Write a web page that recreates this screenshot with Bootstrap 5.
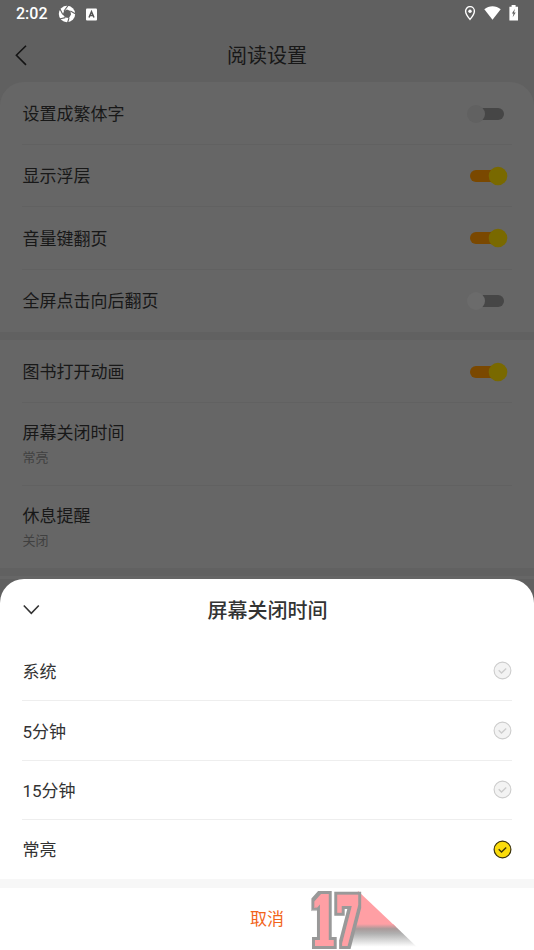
<!DOCTYPE html>
<html lang="zh-CN">
<head>
<meta charset="utf-8">
<meta name="viewport" content="width=device-width, initial-scale=1">
<title>阅读设置</title>
<link href="https://cdn.jsdelivr.net/npm/bootstrap@5.3.0/dist/css/bootstrap.min.css" rel="stylesheet">
<style>
html,body{height:100%}
body{font-family:Roboto,"Noto Sans CJK SC",sans-serif;font-size:17px;line-height:24px;color:#181818;background:#606060;overflow:hidden}
svg{display:block;flex:none}
.phone{height:950px;width:534px}
.status{height:28px;padding:0 15px 0 16px;color:#fff}
.clock{font-size:16px;font-weight:500;line-height:28px;width:42px}
.topbar{height:54px;padding:2px 14px 0}
.topbar .heading{font-size:20px;padding-left:2px}
.settings{background:#666;border-radius:24px 24px 0 0;height:497px}
.group{padding:0 22px}
.group:first-child{padding-bottom:1px}
.group+.group{border-top:8px solid #616161}
.setting{height:62.5px;padding-top:1px}
.setting:first-child{height:61.5px;padding-top:2px}
.setting>span:first-child{padding:1px 0 0 .5px}
.choice>span{padding:2px 0 0 .5px}
.setting+.setting{border-top:1px solid #616161}
.setting.tall{height:83px;padding-top:0}
.value{font-size:13px;line-height:18px;color:#404040;margin-top:4px;padding-left:.5px}
.sheet{background:#fff;border-radius:24px 24px 0 0;margin-top:-24px;position:relative;height:371px;color:#333}
.under{height:603px;flex:none;background:#606060}
.sheet-head{height:62px;padding:0 22px}
.sheet-title{font-size:20px;font-weight:500;color:#333;padding:1px 1px 0 0}
.choices{padding:0 22px}
.choice{height:59.4px}
.choice+.choice{border-top:1.5px solid #eee}
.cancel{border-top:9px solid #f7f7f7;height:71px;color:#f2641a;padding-top:1px}
.stamp{position:absolute;left:308px;bottom:0}
.stamp text{font-family:"DejaVu Serif",serif;font-weight:700}
</style>
</head>
<body>
<div class="phone d-flex flex-column">
  <div class="under">
    <div class="status d-flex align-items-center">
      <span class="clock">2:02</span>
      <svg width="18" height="18" viewBox="0 0 18 18"><circle cx="9" cy="9" r="8.2" fill="#fff"/><g fill="#606060"><path d="M6 6 9 4.6 12.4 6 13 9.5 11 13 7.2 12.6 4.8 9.5Z"/></g><g stroke="#606060" stroke-width="1.1"><path d="M6 6 10.5 0M12.4 6 17.8 9M11 13 9.5 18M7.2 12.6 1.5 14M4.8 9.5 2 4"/></g></svg>
      <svg class="ms-2" width="15" height="13" viewBox="0 0 15 13"><rect x="2" y=".5" width="11" height="12" rx="1" fill="#fff"/><path d="M5 9.5 7.5 3.6 10 9.5M6 7.6H9" fill="none" stroke="#555" stroke-width="1.5"/></svg>
      <svg class="ms-auto" width="12" height="16" viewBox="0 0 12 16"><path d="M6 .6a4.4 4.4 0 0 0-4.4 4.4C1.6 8.4 6 13.4 6 13.4s4.4-5 4.4-8.4A4.4 4.4 0 0 0 6 .6Z" fill="none" stroke="#fff" stroke-width="1.4"/><circle cx="6" cy="5.2" r="1.7" fill="#fff"/></svg>
      <svg class="ms-2" width="17" height="16" viewBox="0 0 17 16"><path d="M.3 3.2C5-.7 12-.7 16.7 3.2L8.5 13.7Z" fill="#fff"/></svg>
      <svg class="ms-2" width="10" height="18" viewBox="0 0 10 18"><path d="M2.6 0h4v1.8h2.4V15.4H.4V1.8H2.6Z" fill="#fff"/><path d="M6 3.8 2.9 8.5H4.5L3.7 12.2 6.7 7.5H5Z" fill="#606060"/></svg>
    </div>
    <header class="topbar d-flex align-items-center">
      <svg width="14" height="22" viewBox="0 0 14 22"><path d="M12 .7 2.4 10.2 12 19.9" fill="none" stroke="#141414" stroke-width="1.6"/></svg>
      <div class="heading flex-grow-1 text-center">阅读设置</div>
      <span class="ps-3"></span>
    </header>
    <main class="settings">
      <section class="group">
        <div class="setting d-flex align-items-center justify-content-between"><span>设置成繁体字</span><svg width="46" height="22"><rect x="6" y="5" width="32" height="12" rx="6" fill="#464646"/><circle cx="10" cy="11" r="9" fill="#616161"/></svg></div>
        <div class="setting d-flex align-items-center justify-content-between"><span>显示浮层</span><svg width="46" height="22"><rect x="4" y="5" width="34" height="12" rx="6" fill="#7a4800"/><circle cx="32" cy="11" r="9.3" fill="#796900"/></svg></div>
        <div class="setting d-flex align-items-center justify-content-between"><span>音量键翻页</span><svg width="46" height="22"><rect x="4" y="5" width="34" height="12" rx="6" fill="#7a4800"/><circle cx="32" cy="11" r="9.3" fill="#796900"/></svg></div>
        <div class="setting d-flex align-items-center justify-content-between"><span>全屏点击向后翻页</span><svg width="46" height="22"><rect x="6" y="5" width="32" height="12" rx="6" fill="#464646"/><circle cx="10" cy="11" r="9" fill="#6b6b6b"/></svg></div>
      </section>
      <section class="group">
        <div class="setting d-flex align-items-center justify-content-between"><span>图书打开动画</span><svg width="46" height="22"><rect x="4" y="5" width="34" height="12" rx="6" fill="#7a4800"/><circle cx="32" cy="11" r="9.3" fill="#796900"/></svg></div>
        <div class="setting tall d-flex flex-column justify-content-center"><span>屏幕关闭时间</span><span class="value">常亮</span></div>
        <div class="setting tall d-flex flex-column justify-content-center"><span>休息提醒</span><span class="value">关闭</span></div>
      </section>
      <section class="group"></section>
    </main>
  </div>
  <div class="sheet flex-shrink-0">
    <div class="sheet-head d-flex align-items-center">
      <svg width="18" height="12" viewBox="0 0 18 12"><path d="M1.8 1.5 9.3 9.3 16.8 1.5" fill="none" stroke="#333" stroke-width="1.6"/></svg>
      <div class="sheet-title flex-grow-1 text-center">屏幕关闭时间</div>
      <span class="ps-3"></span>
    </div>
    <div class="choices">
      <div class="choice d-flex align-items-center justify-content-between"><span>系统</span><svg width="19" height="19" viewBox="0 0 19 19"><circle cx="9.5" cy="9.5" r="8.4" fill="#f3f3f3" stroke="#ccc" stroke-width="1.1"/><path d="M5.7 9.3 8.5 12 13.2 7.5" fill="none" stroke="#ccc" stroke-width="1.3"/></svg></div>
      <div class="choice d-flex align-items-center justify-content-between"><span>5分钟</span><svg width="19" height="19" viewBox="0 0 19 19"><circle cx="9.5" cy="9.5" r="8.4" fill="#f3f3f3" stroke="#ccc" stroke-width="1.1"/><path d="M5.7 9.3 8.5 12 13.2 7.5" fill="none" stroke="#ccc" stroke-width="1.3"/></svg></div>
      <div class="choice d-flex align-items-center justify-content-between"><span>15分钟</span><svg width="19" height="19" viewBox="0 0 19 19"><circle cx="9.5" cy="9.5" r="8.4" fill="#f3f3f3" stroke="#ccc" stroke-width="1.1"/><path d="M5.7 9.3 8.5 12 13.2 7.5" fill="none" stroke="#ccc" stroke-width="1.3"/></svg></div>
      <div class="choice d-flex align-items-center justify-content-between"><span>常亮</span><svg width="19" height="19" viewBox="0 0 19 19"><circle cx="9.5" cy="9.5" r="8.4" fill="#fbdc0b" stroke="#3b320c" stroke-width="1.2"/><path d="M5.7 9.3 8.5 12 13.2 7.5" fill="none" stroke="#3b320c" stroke-width="1.3"/></svg></div>
    </div>
    <div class="cancel d-flex align-items-center justify-content-center">取消</div>
    <svg class="stamp" width="112" height="60" viewBox="0 0 112 60">
      <defs>
        <linearGradient id="fade" x1="0" y1="0" x2="0" y2="1"><stop offset="0" stop-color="#ff9fa4"/><stop offset=".2" stop-color="#a89a9a"/><stop offset=".4" stop-color="#b0b0b0"/><stop offset=".95" stop-color="#fff"/></linearGradient>
        <filter id="outline" filterUnits="userSpaceOnUse" x="0" y="0" width="112" height="60">
          <feMorphology in="SourceGraphic" operator="dilate" radius="1" result="face"/>
          <feMorphology in="SourceAlpha" operator="dilate" radius="4" result="edge"/>
          <feFlood flood-color="#999"/><feComposite in2="edge" operator="in" result="rim"/>
          <feMerge><feMergeNode in="rim"/><feMergeNode in="face"/></feMerge>
        </filter>
      </defs>
      <path d="M50 1 88 37 44 37Z" fill="#ff9fa4"/>
      <path d="M46 34H85L110 58H42Z" fill="url(#fade)"/>
      <g fill="#ff9fa4" filter="url(#outline)">
        <text transform="translate(3 55) scale(.7 1.31)" font-size="52">1</text>
        <text transform="translate(27.6 55) scale(.68 1.31)" font-size="52">7</text>
      </g>
    </svg>
  </div>
</div>
<script src="https://cdn.jsdelivr.net/npm/bootstrap@5.3.0/dist/js/bootstrap.bundle.min.js"></script>
</body>
</html>
